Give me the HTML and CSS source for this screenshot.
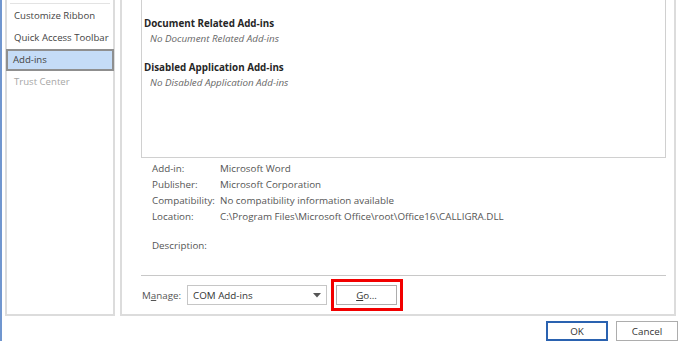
FILE: index.html
```html
<!DOCTYPE html>
<html lang="en">
<head>
    <meta charset="UTF-8">
    <title>Word Options - Add-ins</title>
    <link rel="stylesheet" href="styles.css">
</head>
<body>

    <div class="dialog">
        <div class="main">
            <div class="nav">
                <div class="nav-sep"></div>
                <div class="nav-item">Customize Ribbon</div>
                <div class="nav-item">Quick Access Toolbar</div>
                <div class="nav-item selected">Add-ins</div>
                <div class="nav-item disabled">Trust Center</div>
            </div>

            <div class="content">
                <div class="addin-list">
                    <div class="group-title">Document Related Add-ins</div>
                    <div class="group-empty">No Document Related Add-ins</div>
                    <div class="group-title">Disabled Application Add-ins</div>
                    <div class="group-empty">No Disabled Application Add-ins</div>
                </div>

                <div class="details">
                    <div class="row"><span class="label">Add-in:</span><span>Microsoft Word</span></div>
                    <div class="row"><span class="label">Publisher:</span><span>Microsoft Corporation</span></div>
                    <div class="row"><span class="label">Compatibility:</span><span>No compatibility information available</span></div>
                    <div class="row"><span class="label">Location:</span><span>C:\Program Files\Microsoft Office\root\Office16\CALLIGRA.DLL</span></div>
                    <div class="row description"><span class="label">Description:</span><span></span></div>
                </div>

                <div class="manage">
                    <span class="manage-label">M<u>a</u>nage:</span>
                    <div class="combo">
                        <span>COM Add-ins</span>
                        <svg width="8" height="5" viewBox="0 0 8 5"><path d="M0 0h8L4 4.5z" fill="#555"/></svg>
                    </div>
                    <div class="highlight">
                        <button class="btn go"><u>G</u>o...</button>
                    </div>
                </div>
            </div>
        </div>

        <div class="footer">
            <button class="btn ok">OK</button>
            <button class="btn">Cancel</button>
        </div>
    </div>

</body>
</html>
```

FILE: styles.css
```css
body {
    margin: 0;
    width: 680px;
    height: 341px;
    overflow: hidden;
    background: white;
    font-family: "Open Sans", "Noto Sans", sans-serif;
    font-size: 9.8px;
    color: #444;
}
.dialog {
    height: 341px;
    border-left: 2px solid #7096cf;
    box-sizing: border-box;
}
.main {
    display: flex;
    height: 316px;
}
.nav {
    width: 110px;
    margin-left: 3px;
    border: 2px solid #dcdcdc;
    border-top: none;
    box-sizing: border-box;
    padding: 3px 0 0;
}
.nav-sep {
    height: 1px;
    background: #e3e3e3;
    margin: 0 3px 1px;
}
.nav-item {
    box-sizing: border-box;
    height: 22px;
    line-height: 20px;
    padding-left: 6px;
    border: 1px solid transparent;
    color: #444;
    white-space: nowrap;
    font-size: 9.6px;
}
.nav-item.selected {
    background: #c5dcf7;
    border: 2px solid #8f8f8f;
    line-height: 18px;
    padding-left: 5px;
    margin: 0 -1px;
}
.nav-item.disabled {
    color: #a6a6a6;
}
.content {
    flex: 1;
    margin-left: 5px;
    margin-right: 4px;
    border: 2px solid #dcdcdc;
    border-top: none;
    box-sizing: border-box;
    padding: 0 8px 0 19px;
}
.addin-list {
    height: 158px;
    border: 1px solid #d0d0d0;
    border-top: none;
    box-sizing: border-box;
    padding: 16px 2px 0;
}
.group-title {
    font-weight: bold;
    color: #262626;
    line-height: 15px;
}
.group-empty {
    font-style: italic;
    color: #666;
    padding-left: 6px;
    line-height: 15px;
    margin-bottom: 14px;
}
.details {
    padding: 3px 0 0 11px;
    height: 118px;
    border-bottom: 1px solid #c8c8c8;
    box-sizing: border-box;
}
.row {
    display: flex;
    line-height: 16px;
    color: #555;
}
.row .label {
    width: 68px;
}
.row.description {
    margin-top: 13px;
}
.manage {
    display: flex;
    align-items: center;
    padding-top: 3px;
}
.manage-label {
    width: 45px;
    padding-left: 1px;
    color: #555;
}
.combo {
    width: 140px;
    height: 20px;
    border: 1px solid #c6c6c6;
    box-sizing: border-box;
    display: flex;
    align-items: center;
    justify-content: space-between;
    padding: 0 5px 0 5px;
    color: #333;
}
.highlight {
    margin-left: 4px;
    border: 3px solid #f20000;
    padding: 3px 3px 3px 2px;
}
.btn {
    font-family: "Open Sans", "Noto Sans", sans-serif;
    font-size: 9.8px;
    color: #333;
    background: white;
    border: 1px solid #adadad;
    height: 20px;
    padding: 0;
    cursor: pointer;
}
.btn.go {
    display: block;
    width: 61px;
}
.footer {
    display: flex;
    justify-content: flex-end;
    gap: 8px;
    padding: 5px 2px 0 0;
}
.footer .btn {
    width: 62px;
}
.btn.ok {
    border: 2px solid #2a62b0;
}
```
